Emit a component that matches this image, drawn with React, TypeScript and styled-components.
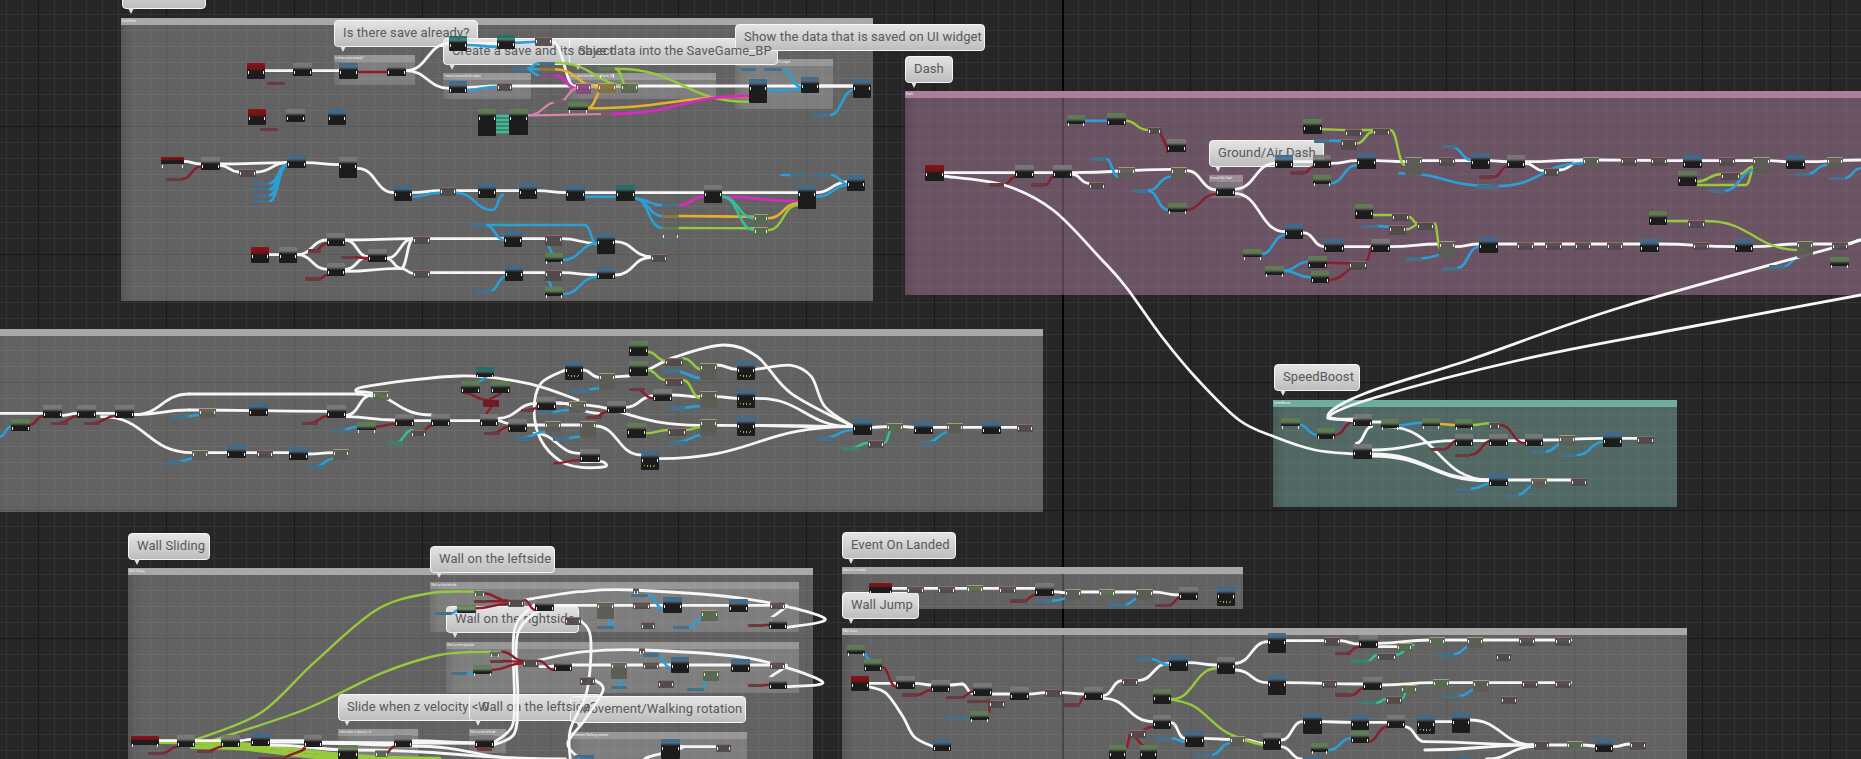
import React from 'react';
import styled, { createGlobalStyle } from 'styled-components';

const GlobalStyle = createGlobalStyle`
  html, body { margin: 0; padding: 0; background: #262626; overflow: hidden; }
`;

// every list below is read off a zoomed crop, so each region has its own origin + x scale (y scale is always 3)
type Region = { x0: number; y0: number; sx: number; nodes: string; wires: string };

const regions: Region[] = [
  {
    x0: 100, y0: 0, sx: 1.96,
    nodes: `
      E 288 190 36 46; G 378 190 38 38; B 468 190 38 46; G 562 190 38 38; r 328 245 34 10
      E 290 328 36 46; G 364 328 38 38; B 447 328 36 46; r 314 383 34 10
      T 684 108 36 44; T 778 105 36 42; M 853 112 32 22; B 684 242 36 36; M 778 248 30 22
      v 806 202 30 10; v 860 185 32 10; o 860 203 32 10; p 860 222 32 10
      P 932 250 30 28; O 977 250 34 26; L 1022 250 32 26; V 978 202 32 10; V 918 305 38 24; k 888 300 24 10; k 982 337 22 10
      V 740 328 36 80; V 802 328 36 76
      B 1272 238 36 70; B 1374 232 36 46; B 1476 238 36 56; v 1256 203 30 10; v 1302 203 34 10; v 1398 340 32 10
      E 120 472 44 20; G 197 472 38 38; M 272 508 34 20; B 367 466 36 38; G 468 472 36 62
      v 300 545 32 10; v 300 563 32 10; v 300 581 32 10; v 300 599 32 10; r 130 533 32 10
      B 576 556 36 46; M 666 562 32 22; B 741 550 36 44; B 821 550 36 46; B 913 556 38 46; T 1011 556 38 46
      G 1184 556 36 54; B 1368 556 36 70; B 1464 526 36 46; v 1352 520 32 10; v 1400 520 32 10
      v 1102 612 32 10; o 1102 644 32 10; V 1102 680 32 10; L 1282 642 28 26; L 1282 680 28 24
      E 296 742 36 46; G 351 742 36 46; G 445 700 36 38; G 445 790 36 38; G 526 748 36 38
      r 408 748 26 10; r 402 832 32 10; r 472 768 28 10; M 614 708 32 20; M 614 810 32 20; v 724 670 32 10
      B 792 694 36 46; B 794 796 36 46; M 873 706 32 30; M 873 810 32 30; V 872 760 36 26; V 872 862 36 26
      v 736 868 32 10; B 974 700 36 62; B 974 802 36 36; M 1080 762 32 20
    `,
    wires: `
      w 324 212 378 212; w 415 212 468 212; R 505 216 562 216; w 600 212 684 130; w 600 212 684 265
      w 720 262 778 258; w 808 258 1476 258; w 720 130 778 130; w 815 125 855 125; w 885 125 935 265
      b 720 270 778 260; b 720 135 778 140; b 812 128 855 125
      b 836 206 860 190; b 836 206 860 208; b 836 206 860 226
      g 892 188 1050 262; o 892 208 980 262; m 892 226 935 265
      g 1010 206 1035 262; g 1010 206 1272 305; o 955 325 1275 290; o 955 325 990 262
      m 1000 342 1272 288; k 838 346 1000 342; k 838 346 900 305; k 900 305 935 265
      t 775 348 802 348; t 775 360 802 360; t 775 372 802 372; t 775 384 802 384; t 775 396 802 396
      b 1308 272 1375 268; b 1338 207 1375 262; b 1430 345 1478 270; w 1410 258 1476 258
      w 164 484 197 492; w 235 492 367 488; w 235 496 272 516; w 306 516 367 488; w 403 488 468 494
      w 505 505 576 578; w 612 578 666 572; w 698 572 741 572; w 777 572 821 572; w 857 572 913 578; w 950 578 1011 578
      w 1048 578 1184 578; w 1220 578 1368 578; w 1404 578 1464 546
      R 162 536 197 500
      b 332 550 367 494; b 332 568 367 494; b 332 586 367 494; b 332 604 367 494
      b 612 590 666 578; b 698 578 770 630; b 770 630 790 585; b 950 590 1011 590; b 1404 590 1468 555; b 1336 525 1352 525; b 1432 525 1470 555
      b 1048 595 1102 616; b 1048 595 1102 648; b 1048 595 1102 684
      m 1134 616 1184 590; m 1220 590 1368 604; o 1134 648 1282 650; g 1134 684 1282 685
      t 1220 590 1282 690; t 1220 590 1282 655; o 1310 655 1368 610; g 1310 690 1368 615
      w 332 764 351 764; w 387 764 445 720; w 387 764 445 808; w 481 720 526 770; w 481 808 526 770; w 562 775 590 805
      w 481 720 614 716; w 646 716 792 716; w 828 716 874 716; w 905 716 974 730; w 481 814 590 805; w 590 805 614 716; w 562 775 614 716
      w 590 805 614 820; w 646 818 794 818; w 830 818 874 818; w 905 818 974 825
      w 1010 725 1080 770; w 1010 825 1080 772
      R 420 752 445 730; R 432 835 445 825; R 500 772 526 775
      b 756 675 950 675; b 950 675 975 735; b 756 675 792 720; b 766 872 794 830; b 876 735 890 765; b 908 780 975 730; b 876 840 890 868; b 908 882 975 830
    `,
  },
  {
    x0: 900, y0: 50, sx: 1.6316,
    nodes: `
      E 41 345 30 48; G 188 345 30 40; G 250 345 30 40; r 145 400 24 10; r 214 400 24 10; M 308 395 26 20
      V 272 196 30 26; V 338 190 30 36; M 404 232 22 18; G 436 268 30 38
      v 312 320 24 12; Y 356 350 28 32; v 380 416 24 12; Y 442 350 26 34; V 438 460 30 26
      G 516 398 30 40; B 612 316 30 38; G 674 316 30 38; r 636 364 24 10; B 746 310 30 46; V 674 376 30 26
      V 658 206 30 46; M 726 236 28 18; M 772 234 28 18; v 676 268 24 10; M 720 268 26 28
      Y 824 322 28 50; M 880 322 26 24; v 884 285 24 10; B 932 310 30 46; G 990 316 30 38; r 944 376 26 10; M 1050 354 26 20
      v 942 404 36 12; Y 1115 322 26 28; M 1176 322 26 22; M 1226 322 26 22; B 1278 316 30 38; M 1336 322 26 22
      Y 1392 322 28 48; B 1446 316 30 40; Y 1512 322 26 28; V 1270 364 30 44; M 1340 366 30 20; v 1320 418 26 10; v 1458 368 26 10; v 1516 380 26 10
      V 742 462 30 44; M 802 490 28 20; v 754 524 26 10; M 798 524 28 28; M 844 516 28 20; Y 880 574 26 48; v 826 622 26 10; v 884 652 26 10
      B 945 562 30 46; M 1006 576 28 20; M 1052 576 28 20; M 1102 576 26 20; M 1154 576 26 20; B 1208 568 30 38; M 1294 576 26 20; B 1362 568 30 38
      Y 1464 574 26 48; M 1520 576 26 20; v 1418 646 26 10; V 1518 622 30 26; V 1222 484 30 42; M 1286 510 28 20
      B 628 522 30 44; B 692 568 32 38; G 768 568 32 38; V 560 598 30 24; V 596 648 30 26; V 666 618 30 36; V 670 664 30 34; M 732 634 30 22
    `,
    wires: `
      w 70 368 190 368; w 218 368 250 368; w 280 368 442 358; w 280 372 308 400; w 468 362 516 420; w 546 418 612 340; w 546 430 628 545
      w 642 335 674 335; w 704 340 746 332; w 776 332 824 335; w 852 332 932 332; w 962 332 990 335; w 1020 340 1050 362; w 1076 360 1115 330; w 1020 335 1115 330
      w 1141 330 1278 332; w 1308 332 1392 332; w 1420 332 1446 335; w 1476 335 1568 330
      w 658 548 692 590; w 724 590 768 590; w 800 590 880 582; w 906 590 945 582; w 975 582 1208 582; w 1238 582 1362 590; w 1392 590 1464 582; w 1490 582 1520 582; w 1546 582 1568 570
      R 168 405 190 380; R 238 405 250 380; R 436 305 425 240; R 466 480 516 432; R 660 368 674 350; R 970 380 990 350
      b 302 212 338 212; g 368 212 404 240; b 336 326 356 380; b 404 422 442 380; b 404 422 438 480
      g 688 238 726 240; g 754 240 772 240; g 800 240 824 345; b 700 272 720 272; g 746 280 772 245
      b 815 370 965 408; b 975 408 1115 340; b 900 290 932 330; b 702 400 746 345
      g 1300 395 1340 372; g 1370 372 1392 350; g 1300 405 1380 405; g 1380 405 1395 350; b 1345 422 1395 360
      b 1480 372 1512 345; b 1540 385 1568 355
      g 772 495 802 495; g 830 500 844 520; b 778 528 798 530; g 826 538 850 520; g 872 520 882 600
      b 850 625 885 615; b 908 655 945 590; g 1252 513 1286 513; g 1314 513 1470 600
      b 1440 650 1470 620; b 590 612 628 555; b 626 662 666 635; b 626 662 670 682
      R 696 638 732 640; R 700 690 750 650; R 762 630 770 590
    `,
  },
  {
    x0: 0, y0: 320, sx: 1.479,
    nodes: `
      V 16 298 28 34; G 64 256 28 38; G 114 256 28 38; G 170 256 28 38; r 76 305 24 10; r 124 305 24 10
      Y 295 264 24 28; v 254 286 26 10; B 368 250 28 38; G 484 256 28 38; r 446 305 24 10; L 552 212 24 24
      V 528 305 28 24; v 488 328 24 10; G 584 282 28 36; G 638 282 28 36; M 608 330 22 16; t 572 364 24 10
      T 704 142 26 28; V 682 184 28 34; V 726 184 28 34; X 714 240 24 20; G 710 282 26 36; r 716 335 24 10; G 752 298 28 38
      G 794 232 28 38; Y 842 244 24 30; r 770 268 20 8; v 794 272 24 10; v 762 352 24 10; Y 806 304 24 30; v 818 352 24 10; Y 858 302 24 50
      Z 836 124 26 56; Y 886 160 24 48; v 846 208 26 10; V 930 64 28 44; V 930 124 28 44; M 984 114 26 20; M 984 174 26 20; v 982 148 24 10
      Y 1036 130 24 48; Z 1090 124 26 56; r 930 204 24 10; G 966 208 28 36; G 898 244 28 36; r 866 288 24 10; Y 1036 214 24 48; Z 1090 208 26 56
      v 990 262 24 10; V 928 310 28 44; M 988 324 26 20; Y 1036 298 24 48; Z 1090 292 26 56; v 990 364 24 10; Z 948 394 26 56; G 858 388 30 38
      B 1262 298 28 46; L 1312 310 24 20; v 1208 352 24 10; M 1284 360 24 20; t 1246 382 24 10; B 1352 304 28 38; Y 1400 310 24 26; v 1360 364 24 10
      B 1452 304 28 38; M 1504 312 24 20; Y 284 390 24 28; v 244 424 26 10; B 336 376 28 38; M 380 390 24 20; B 428 382 28 38; Y 492 388 24 28; v 454 436 26 10
    `,
    wires: `
      w 0 280 64 280; w 92 286 114 280; w 142 280 170 280; w 198 284 280 222; w 280 222 530 222; w 530 222 552 228
      w 198 284 280 270; w 280 270 484 274; w 150 290 284 398; w 308 398 336 398; w 364 398 428 398; w 456 402 492 398
      w 512 286 550 225; w 512 290 584 300; w 612 302 638 302; w 666 302 710 302; w 530 215 638 285; w 736 302 752 310; w 736 295 794 250
      w~ 530 222 540 200 680 168 780 190 855 240; w 780 315 858 315; w 822 248 886 280; w 880 318 948 405
      w 790 340 858 400; w~ 836 150 800 190 790 270 800 360 830 425 860 442 895 440 890 425 860 425
      w 862 150 886 172; w 910 170 930 168; w 822 250 1036 316; w 1060 316 1262 320; w 974 416 1262 320; w 926 262 966 228; w 994 225 1036 230
      w~ 958 150 1000 110 1070 75 1120 110 1170 220 1262 320
      w 1060 135 1090 148; w~ 1118 148 1170 136 1200 170 1220 260 1262 320; w 1060 230 1090 235; w 1118 235 1262 320; w 1118 316 1262 320
      w 1290 322 1312 320; w 1336 320 1352 322; w 1380 322 1400 322; w 1424 322 1452 322; w 1480 322 1504 322
      b 0 350 16 320; b 270 290 295 285; b 500 332 530 320; b 860 212 886 205; b 810 278 842 270; b 770 356 806 335; b 830 356 858 350
      b 995 152 1040 175; b 1000 265 1040 258; b 1000 367 1040 345; b 1215 356 1262 330; b 1370 368 1405 335; b 465 440 495 415; b 256 428 290 415; b 704 186 730 160
      R 44 315 64 288; R 90 308 114 288; R 140 308 170 288; R 460 308 484 288; R 555 320 584 312; R 620 340 640 315
      R 685 218 720 240; R 740 218 725 240; R 726 260 720 282; R 730 338 752 320; R 780 270 794 265; R 880 290 898 275; R 940 208 966 235; R 820 430 858 420
      g 958 95 984 122; g 1010 115 1040 150; g 958 150 984 180; g 1010 180 1036 235; g 955 340 988 330; g 1014 330 1036 322
      t 585 368 610 330; t 1258 385 1284 368; t 1308 368 1320 325
    `,
  },
  {
    x0: 1060, y0: 250, sx: 1.9575,
    nodes: `
      V 433 503 36 24; V 503 533 36 34; G 574 492 36 36; V 628 508 36 26; V 708 503 36 26; V 773 508 36 26; M 840 515 22 18
      G 773 552 36 36; G 840 552 36 36; G 910 552 36 36; Y 976 556 32 30; B 1062 546 38 44; M 1130 558 32 20; G 574 582 36 46
      r 724 594 30 10; r 773 612 30 10; v 922 600 30 10; v 982 612 30 10; B 840 672 36 36; Y 922 684 32 28; M 1000 684 32 20; v 773 714 32 10; v 868 732 30 10
    `,
    wires: `
      b 469 525 503 555; R 539 555 574 515; w 610 516 628 516; w 580 580 610 530; w 610 600 773 572; w 808 572 840 572; w 876 572 910 572
      R 862 525 910 580; b 664 526 708 518; o 744 522 773 525; g 808 525 840 520; w 640 530 840 690; w 610 612 840 690; w 610 618 840 692
      w 876 690 1000 690; w 946 570 1062 565; w 1098 565 1130 565; R 750 598 780 570; R 805 614 845 572; b 950 605 990 575; b 1012 615 1065 575; b 805 716 845 700; b 895 735 930 705
    `,
  },
  {
    x0: 100, y0: 530, sx: 2.063,
    nodes: `
      E 64 618 58 26; G 158 616 38 36; r 100 665 34 10; G 250 616 38 36; r 200 660 34 10; B 312 610 38 38; r 325 680 60 10; M 385 680 28 7; G 420 616 38 36
      V 492 645 40 42; L 568 660 26 18; G 606 616 38 36; G 774 615 38 40; r 778 652 30 10
      L 772 180 22 16; r 772 209 26 10; V 736 226 40 24; v 692 245 34 10; M 842 206 32 22; G 898 208 38 36; M 960 262 32 20; Y 1026 215 34 48; v 1026 287 34 10
      M 1100 175 12 10; v 1096 192 34 10; M 1100 215 34 20; B 1162 202 38 46; M 1116 275 30 20; L 1240 240 34 30; v 1182 287 34 10; B 1298 208 38 38; M 1382 215 32 20; G 1380 262 38 36; r 1336 282 34 10
      L 804 362 22 14; r 804 389 30 10; V 770 406 38 26; v 724 425 34 10; M 872 386 32 22; G 936 388 38 36; M 990 442 32 20; Y 1054 396 34 48; v 1054 467 34 10
      M 1112 355 12 10; v 1120 370 34 10; M 1120 395 34 20; B 1178 382 38 46; M 1152 450 32 20; L 1245 420 32 30; v 1212 473 34 10; B 1302 388 38 38; M 1382 395 32 20; G 1380 442 38 36; r 1336 462 34 10
      B 1157 628 40 58; M 1270 642 32 20; G 1070 680 38 10; B 980 676 40 15
    `,
    wires: `
      g~ 195 630 330 550 440 400 570 240 680 190 770 185; g~ 230 632 420 540 580 430 700 375 804 365; G 120 635 700 687; G 190 650 560 687
      w 120 632 158 632; w 195 632 250 632; w 288 632 312 628; w 350 632 420 632; w 350 636 774 640; w 350 645 520 660; w 520 660 960 687
      w 458 640 606 645; w 644 632 774 638; w 640 648 900 687; w~ 812 638 850 590 855 500 855 300 895 225; w~ 812 645 855 610 862 500 862 310 920 225
      w 936 226 1382 226; w~ 875 210 990 185 1100 180 1340 208 1495 265 1418 292; w 1414 226 1385 270
      w 974 405 1382 405; w~ 905 390 1000 365 1120 360 1340 385 1490 455 1418 470; w 1414 405 1385 445
      w~ 990 270 1012 320 1005 480 970 600 970 687; w~ 1020 450 1038 480 1000 570 965 640 990 687; w 908 410 974 405
      w 1197 650 1270 650; w 1197 650 1130 687
      R 790 190 842 212; R 795 214 842 214; R 775 235 842 222; R 875 210 898 240; R 830 365 872 392; R 830 393 872 395; R 808 420 872 400; R 905 392 936 420
      b 725 250 740 240; b 1035 235 1060 290; b 1130 195 1165 240; b 1215 292 1245 260; b 760 430 775 425; b 1062 440 1085 472; b 1145 375 1180 415; b 1245 475 1250 445
      R 1370 285 1382 285; R 1370 465 1382 465; R 130 670 158 650; R 230 660 250 650; R 420 655 385 684; R 590 670 606 650
    `,
  },
  {
    x0: 830, y0: 530, sx: 1.782,
    nodes: `
      E 70 160 40 28; M 137 168 30 18; M 193 168 30 18; L 245 166 28 20; M 302 168 30 18; G 365 160 34 38; r 320 208 30 10; Y 418 178 30 30; L 480 178 28 22; Y 546 178 30 30
      v 366 208 30 10; v 498 220 30 10; G 622 172 34 38; r 580 222 30 10; Z 690 172 32 56
      V 31 346 32 26; V 60 388 32 34; E 38 438 32 46; G 118 438 34 38; G 180 450 34 36; r 128 490 28 10; G 254 460 34 38; r 206 498 30 10; G 320 472 34 38
      r 244 510 44 10; M 284 510 28 20; V 250 544 34 26; v 206 560 44 10; M 384 478 30 20; G 453 472 34 38; r 415 520 30 10; M 520 444 28 20; v 544 382 30 10
      B 604 376 34 46; G 690 382 32 50; V 576 478 32 44; B 780 310 32 60; B 780 436 32 60
      M 880 322 28 22; G 942 316 34 38; r 900 365 28 10; L 1010 340 28 20; M 975 368 34 18; t 928 388 32 10; L 1068 320 28 22; Y 1136 320 28 32; v 1082 370 30 10; M 1186 370 28 20; M 1228 322 28 22; M 1292 322 28 22
      M 876 450 28 22; G 950 442 34 38; r 900 490 28 10; L 1018 464 28 22; M 990 498 30 20; t 943 513 30 10; L 1075 448 28 22; Y 1146 450 28 32; v 1092 495 30 10; M 1196 498 28 20; M 1234 450 28 22; M 1292 450 28 22
      G 576 556 32 40; M 534 600 30 20; v 580 622 30 10; B 632 604 34 46; V 498 646 30 41; V 552 646 30 41; Y 712 618 28 28; v 650 670 30 10; G 772 610 32 50; B 184 628 32 36
      V 858 640 30 26; B 842 550 34 62; B 928 556 32 44; V 928 604 32 34; G 992 556 32 38; Z 1046 556 32 56; B 1108 550 32 60; M 1254 634 28 22; L 1314 632 28 22; B 1364 628 32 38; M 1426 634 28 22; B 842 680 34 10; B 1108 680 32 8
    `,
    wires: `
      w 110 175 365 175; w 398 185 418 188; w 448 186 546 186; w 576 186 622 195; b 395 212 425 205; b 525 225 550 205; R 345 214 365 195; R 605 225 625 200
      w 70 460 118 460; w 152 460 180 465; w 214 465 235 462; w 235 462 254 490; w 288 492 320 492; w 354 492 384 488; w 414 488 453 492; w 487 497 520 452; w 548 452 604 400
      w 638 398 690 405; w 722 400 780 335; w 812 332 880 332; w 908 332 942 342; w 976 340 1068 330; w 1096 330 1136 330; w 1164 330 1320 330; w 976 350 1010 350
      w 722 420 780 458; w 812 458 950 462; w 984 465 1075 458; w 1103 458 1146 458; w 1174 458 1320 458
      w 487 505 576 575; w 608 578 632 625; w 666 625 712 628; w 740 630 772 640; w 804 630 842 575; w 876 575 928 577; w 960 577 992 577; w 1024 590 1060 635; w 1060 635 1254 645
      w 1078 575 1108 575; w 1140 570 1254 645; w 1060 660 1254 645; w 1170 687 1254 650; w 804 650 840 687; w 1282 645 1314 645; w 1342 645 1364 648; w 1396 650 1426 642
      w~ 70 470 100 490 130 560 150 620 184 650
      g 608 508 690 415; g~ 608 508 650 530 700 600 740 630 772 645
      R 92 410 118 470; R 155 495 180 480; R 235 502 254 485; R 442 525 453 500; R 920 370 942 350; R 930 495 950 475; R 534 620 576 590; R 534 615 530 650; R 534 615 565 650; R 960 635 992 590; R 284 510 284 545
      b 60 370 70 388; b 570 386 604 405; b 610 625 632 635; b 680 675 712 640; b 240 565 250 565; b 890 660 928 625; b 510 687 500 680; b 1112 372 1145 345; b 1122 497 1155 475
      t 958 393 975 375; t 1008 375 1040 345; t 975 518 990 508; t 1020 505 1030 470
    `,
  },
];

// wires that cross regions, in page pixels
const longWires = [
  { color: 'w', smooth: true, pts: [[943, 176], [1004, 185], [1053, 210], [1102, 260], [1126, 287], [1162, 337], [1198, 380], [1239, 420], [1275, 437], [1315, 450], [1354, 454]] },
  { color: 'w', smooth: true, pts: [[1356, 421], [1328, 415], [1366, 393], [1469, 360], [1622, 307], [1861, 240]] },
  { color: 'w', smooth: true, pts: [[1356, 419], [1328, 417], [1377, 397], [1520, 360], [1673, 330], [1861, 295]] },
];

const wireColors: Record<string, [string, number]> = {
  w: ['#f6f6f6', 2.8],
  b: ['#2a9fd8', 2.6],
  R: ['#8c1d2a', 2.4],
  g: ['#97c93d', 2.4],
  G: ['#97c93d', 4.5],
  o: ['#e6b02e', 2.6],
  m: ['#d62bbd', 2.8],
  k: ['#d884ac', 2.2],
  t: ['#2fc39a', 2.4],
};

const curve = (pts: number[][]) => {
  let d = `M${pts[0][0].toFixed(1)} ${pts[0][1].toFixed(1)}`;
  for (let i = 1; i < pts.length; i++) {
    const [ax, ay] = pts[i - 1];
    const [bx, by] = pts[i];
    const h = Math.abs(bx - ax) * 0.5;
    d += `C${(ax + h).toFixed(1)} ${ay.toFixed(1)} ${(bx - h).toFixed(1)} ${by.toFixed(1)} ${bx.toFixed(1)} ${by.toFixed(1)}`;
  }
  return d;
};

// catmull-rom through the points, for the long arcs
const spline = (pts: number[][]) => {
  let d = `M${pts[0][0].toFixed(1)} ${pts[0][1].toFixed(1)}`;
  for (let i = 0; i < pts.length - 1; i++) {
    const p0 = pts[i - 1] || pts[i];
    const p1 = pts[i];
    const p2 = pts[i + 1];
    const p3 = pts[i + 2] || p2;
    d += `C${(p1[0] + (p2[0] - p0[0]) / 6).toFixed(1)} ${(p1[1] + (p2[1] - p0[1]) / 6).toFixed(1)} ${(p2[0] - (p3[0] - p1[0]) / 6).toFixed(1)} ${(p2[1] - (p3[1] - p1[1]) / 6).toFixed(1)} ${p2[0].toFixed(1)} ${p2[1].toFixed(1)}`;
  }
  return d;
};

const split = (s: string) => s.split(/[;\n]/).map((l) => l.trim()).filter(Boolean);

const allNodes = regions.flatMap((r) =>
  split(r.nodes).map((l) => {
    const [kind, x, y, w, h] = l.split(/\s+/);
    return { kind, x: r.x0 + +x / r.sx, y: r.y0 + +y / 3, w: +w / r.sx, h: +h / 3 };
  }),
);

const allWires = [
  ...regions.flatMap((r) =>
    split(r.wires).map((l) => {
      const [head, ...rest] = l.split(/\s+/);
      const nums = rest.map(Number);
      const pts: number[][] = [];
      for (let i = 0; i < nums.length; i += 2) pts.push([r.x0 + nums[i] / r.sx, r.y0 + nums[i + 1] / 3]);
      return { color: head[0], smooth: head.endsWith('~'), pts };
    }),
  ),
  ...longWires,
];

type Tone = 'plain' | 'pink' | 'teal' | 'inner';

const comments: { x: number; y: number; w: number; h: number; tone: Tone; title: string }[] = [
  { x: 121, y: 18, w: 752, h: 283, tone: 'plain', title: 'SaveGame' },
  { x: 334, y: 55, w: 81, h: 30, tone: 'inner', title: 'Is there save already?' },
  { x: 443, y: 73, w: 88, h: 26, tone: 'inner', title: 'Create a save and its object' },
  { x: 569, y: 73, w: 147, h: 26, tone: 'inner', title: 'Save data into the SaveGame_BP' },
  { x: 735, y: 59, w: 98, h: 50, tone: 'inner', title: 'Show the data that is saved on UI widget' },
  { x: 905, y: 91, w: 980, h: 204, tone: 'pink', title: 'Dash' },
  { x: 1209, y: 175, w: 34, h: 23, tone: 'inner', title: 'Ground/Air Dash' },
  { x: -10, y: 329, w: 1053, h: 183, tone: 'plain', title: '' },
  { x: 1273, y: 400, w: 404, h: 107, tone: 'teal', title: 'SpeedBoost' },
  { x: 128, y: 568, w: 685, h: 210, tone: 'plain', title: 'Wall Sliding' },
  { x: 430, y: 582, w: 369, h: 50, tone: 'inner', title: 'Wall on the leftside' },
  { x: 446, y: 642, w: 353, h: 51, tone: 'inner', title: 'Wall on the rightside' },
  { x: 338, y: 729, w: 80, h: 50, tone: 'inner', title: 'Slide when z velocity < 0' },
  { x: 469, y: 729, w: 37, h: 24, tone: 'inner', title: 'Wall on the leftside' },
  { x: 570, y: 732, w: 177, h: 50, tone: 'inner', title: 'Movement/Walking rotation' },
  { x: 842, y: 567, w: 401, h: 42, tone: 'plain', title: 'Event On Landed' },
  { x: 842, y: 628, w: 845, h: 150, tone: 'plain', title: 'Wall Jump' },
];

const bubbles = [
  { x: 122, y: -18, w: 84, text: 'Save Game' },
  { x: 334, y: 20, w: 144, text: 'Is there save already?' },
  { x: 443, y: 38, w: 174, text: 'Create a save and its object' },
  { x: 569, y: 38, w: 209, text: 'Save data into the SaveGame_BP' },
  { x: 735, y: 24, w: 250, text: 'Show the data that is saved on UI widget' },
  { x: 905, y: 56, w: 48, text: 'Dash' },
  { x: 1209, y: 140, w: 115, text: 'Ground/Air Dash' },
  { x: 1274, y: 364, w: 86, text: 'SpeedBoost' },
  { x: 128, y: 533, w: 82, text: 'Wall Sliding' },
  { x: 430, y: 546, w: 125, text: 'Wall on the leftside' },
  { x: 446, y: 606, w: 133, text: 'Wall on the rightside' },
  { x: 338, y: 694, w: 158, text: 'Slide when z velocity < 0' },
  { x: 469, y: 694, w: 133, text: 'Wall on the leftside?' },
  { x: 570, y: 696, w: 176, text: 'Movement/Walking rotation' },
  { x: 842, y: 532, w: 114, text: 'Event On Landed' },
  { x: 842, y: 592, w: 77, text: 'Wall Jump' },
];

const Canvas = styled.div`
  position: relative;
  width: 1861px;
  height: 759px;
  overflow: hidden;
  background-color: #262626;
  background-image:
    linear-gradient(to right, #000 2px, transparent 2px),
    linear-gradient(to right, #181818 1px, transparent 1px),
    linear-gradient(to bottom, #181818 1px, transparent 1px),
    linear-gradient(to right, #343434 1px, transparent 1px),
    linear-gradient(to bottom, #343434 1px, transparent 1px);
  background-size: 2px 100%, 128px 128px, 128px 128px, 16px 16px, 16px 16px;
  background-position: 1062px 0, 38px 0, 0 126px, 6px 0, 0 14px;
  background-repeat: no-repeat, repeat, repeat, repeat, repeat;
`;

const toneBody: Record<Tone, string> = {
  plain: 'rgba(255,255,255,.28)',
  pink: 'rgba(191,142,176,.45)',
  teal: 'rgba(140,196,187,.42)',
  inner: 'rgba(255,255,255,.18)',
};
const toneHead: Record<Tone, string> = {
  plain: '#a8a8a8',
  pink: '#ad7da0',
  teal: '#6fae9f',
  inner: 'rgba(255,255,255,.2)',
};

const Comment = styled.div.attrs<{ $x: number; $y: number; $w: number; $h: number }>((p) => ({
  style: { left: p.$x, top: p.$y, width: p.$w, height: p.$h },
}))<{ $x: number; $y: number; $w: number; $h: number; $tone: Tone }>`
  position: absolute;
  background: ${(p) => toneBody[p.$tone]};
  box-shadow: inset 10px 0 14px -8px rgba(0, 0, 0, 0.18);
`;

const CommentHead = styled.div<{ $tone: Tone }>`
  height: 6.5px;
  padding-left: 1px;
  background: ${(p) => toneHead[p.$tone]};
  color: #f2f2f2;
  font: 3px/6px 'Roboto', sans-serif;
  white-space: nowrap;
  overflow: hidden;
`;

const Bubble = styled.div.attrs<{ $x: number; $y: number; $w: number }>((p) => ({
  style: { left: p.$x, top: p.$y, width: p.$w },
}))<{ $x: number; $y: number; $w: number }>`
  position: absolute;
  box-sizing: border-box;
  height: 26.5px;
  padding-left: 8px;
  background: linear-gradient(#e4e4e4, #bdbdbd);
  border: 1px solid #f6f6f6;
  border-radius: 4px;

  &::after {
    content: '';
    position: absolute;
    left: 5px;
    top: 100%;
    border-left: 3px solid transparent;
    border-right: 3px solid transparent;
    border-top: 6px solid #e2e2e2;
  }
`;

const BubbleText = styled.span`
  position: relative;
  z-index: 1;
  font: 13px/23px 'Roboto', sans-serif;
  letter-spacing: 0.1px;
  color: #595959;
  white-space: nowrap;
`;

const WireLayer = styled.svg`
  position: absolute;
  left: 0;
  top: 0;
  z-index: 2;
`;

const headColor: Record<string, string> = {
  E: '#8a1216',
  G: '#7a7a7a',
  B: '#3d6a8c',
  Z: '#3d6a8c',
  V: '#5f7f52',
  T: '#1f6f68',
};

// compact pure nodes, and little variable getters
const flatColor: Record<string, string> = {
  M: 'rgba(80,74,74,.95)',
  Y: 'rgba(92,92,84,.95)',
  L: 'rgba(88,104,80,.95)',
  O: 'rgba(130,114,66,.95)',
  P: 'rgba(130,74,122,.95)',
  X: '#6d1c22',
  v: '#44708c',
  r: '#6b3a3e',
  o: '#8a7a3a',
  p: '#8a4a86',
  k: '#7c5a6c',
  t: '#3c8070',
};

const Node = styled.div.attrs<{ $x: number; $y: number; $w: number; $h: number }>((p) => ({
  style: { left: p.$x, top: p.$y, width: p.$w, height: p.$h },
}))<{ $x: number; $y: number; $w: number; $h: number; $kind: string }>`
  position: absolute;
  z-index: 3;
  border-radius: 1px;
  ${(p) =>
    headColor[p.$kind]
      ? `background: linear-gradient(${headColor[p.$kind]} 0, ${headColor[p.$kind]}cc 4px, #3a3a3a 6px, #1c1c1c 7px);`
      : `background: ${flatColor[p.$kind]};`}

  ${(p) =>
    p.$kind === 'E' &&
    'background: linear-gradient(#8a1216 0, #6a1418 40%, #2a1a1a 45%, #1c1c1c 60%);'}

  ${(p) =>
    'MYLOPGBZEVT'.includes(p.$kind) &&
    `&::before, &::after {
      content: '';
      position: absolute;
      top: ${headColor[p.$kind] ? 8 : 2}px;
      width: 1px;
      height: 3px;
      background: #f0f0f0;
    }
    &::before { left: 1px; }
    &::after { right: 1px; }`}

  ${(p) =>
    'YLOP'.includes(p.$kind) && `border-top: 1px solid rgba(225, 205, 150, 0.55);`}

  ${(p) =>
    p.$kind === 'M' && `border-top: 1px solid rgba(210, 130, 130, 0.5);`}
`;

const Stripe = styled.i`
  position: absolute;
  left: 3px;
  right: 3px;
  bottom: 3px;
  height: 2px;
  background: repeating-linear-gradient(115deg, #b8a83c 0 1px, transparent 1px 3px);
`;

export default function App() {
  return (
    <Canvas>
      <GlobalStyle />
      {comments.map((c, i) => (
        <Comment key={i} $x={c.x} $y={c.y} $w={c.w} $h={c.h} $tone={c.tone}>
          <CommentHead $tone={c.tone}>{c.title}</CommentHead>
        </Comment>
      ))}
      {bubbles.map((b, i) => (
        <Bubble key={i} $x={b.x} $y={b.y} $w={b.w}>
          <BubbleText>{b.text}</BubbleText>
        </Bubble>
      ))}
      <WireLayer width={1861} height={759} fill="none" strokeLinecap="round">
        {allWires.map((w, i) => (
          <path
            key={i}
            d={w.smooth ? spline(w.pts) : curve(w.pts)}
            stroke={wireColors[w.color][0]}
            strokeWidth={wireColors[w.color][1]}
          />
        ))}
      </WireLayer>
      {allNodes.map((n, i) => (
        <Node key={i} $x={n.x} $y={n.y} $w={n.w} $h={n.h} $kind={n.kind}>
          {n.kind === 'Z' && <Stripe />}
        </Node>
      ))}
    </Canvas>
  );
}
